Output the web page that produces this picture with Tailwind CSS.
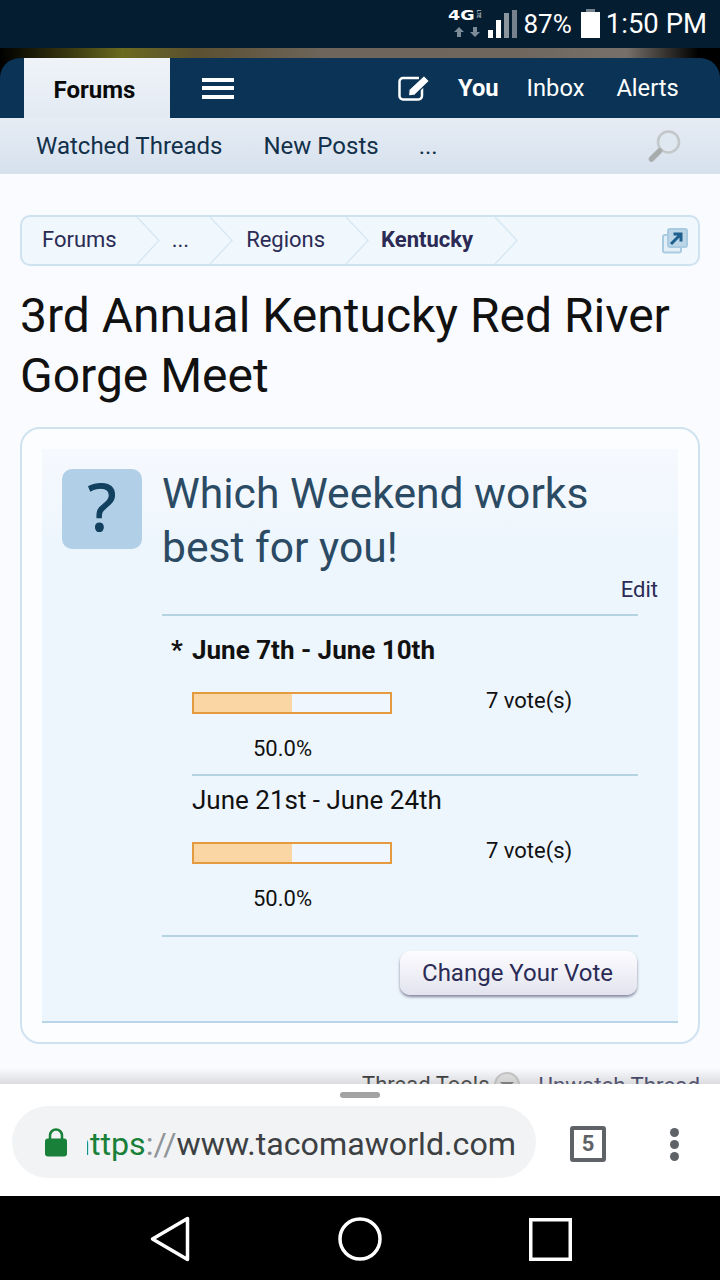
<!DOCTYPE html>
<html>
<head>
<meta charset="utf-8">
<title>3rd Annual Kentucky Red River Gorge Meet</title>
<script src="https://cdn.jsdelivr.net/npm/@tailwindcss/browser@4"></script>
</head>
<body class="m-0 bg-black font-['Roboto',sans-serif]">
<div class="w-[720px] h-[1280px] flex flex-col overflow-hidden">

  <!-- status bar -->
  <div class="h-[48px] shrink-0 bg-[#051d31] flex items-center justify-end pr-[13px] text-white">
    <div class="relative w-[36px] h-[38px] mr-[3px] shrink-0">
      <span class="absolute left-[-1px] top-[3px] origin-left scale-x-125 text-[14px] leading-[14px] font-bold text-white font-['DejaVu_Sans',sans-serif]">4G</span>
      <span class="absolute left-[26px] top-[5px] text-[5px] leading-[8px] font-bold text-[#b8c0c7] [writing-mode:vertical-rl]">LTE</span>
      <svg class="absolute left-[5px] top-[22px]" width="26" height="10" viewBox="0 0 26 10"><path d="M5 0l5 5H7v5H3V5H0z M21 10l-5-5h3V0h4v5h3z" fill="#7d8b96"/></svg>
    </div>
    <svg class="mr-[7px] mb-[1px]" width="29" height="29" viewBox="0 0 29 29">
      <rect x="0" y="21" width="5" height="8" fill="#fff"/>
      <rect x="8" y="11" width="5" height="18" fill="#fff"/>
      <rect x="16" y="4" width="5" height="25" fill="#8a959e"/>
      <rect x="24" y="1" width="5" height="28" fill="#75828e"/>
    </svg>
    <span class="text-[26px] leading-none mr-[9px] mb-[1px]">87%</span>
    <svg class="mr-[6px] mb-[1px]" width="19" height="29" viewBox="0 0 19 29"><rect x="5" y="0" width="9" height="4" fill="#75828e"/><rect x="0" y="3" width="19" height="26" fill="#fff"/></svg>
    <span class="text-[27.5px] leading-none mb-[1px]">1:50 PM</span>
  </div>

  <!-- header photo strip + nav -->
  <div class="h-[70px] shrink-0 bg-[linear-gradient(90deg,#000_0%,#3c3a10_10%,#6b6a20_17%,#5b5030_27%,#6e655c_45%,#6f675e_72%,#77706a_87%,#000_97%)]">
    <div class="mt-[10px] h-[60px] flex items-center bg-[#0a3355] rounded-t-[20px] text-white">
      <div class="ml-[24px] w-[146px] h-[60px] pt-[3px] pr-[5px] shrink-0 bg-[linear-gradient(#eff3f8,#e3eaf3)] text-[#0a0a0a] font-bold text-[24px] flex items-center justify-center">Forums</div>
      <div class="ml-[32px] w-[32px] h-[21px] flex flex-col justify-between">
        <div class="h-[4px] bg-white"></div>
        <div class="h-[4px] bg-white"></div>
        <div class="h-[4px] bg-white"></div>
      </div>
      <svg class="ml-[164px]" width="34" height="26" viewBox="0 0 34 26" fill="none">
        <path d="M24 13v8a3.5 3.5 0 0 1-3.5 3.5H5A3.5 3.5 0 0 1 1.5 21V6.500A3.5 3.5 0 0 1 5 3h16" stroke="#fff" stroke-width="2.500"/>
        <path d="M11 14.500L26 0.500l5.500 5.500L17 20l-6.500 1z" fill="#fff" stroke="#0a3355" stroke-width="1.200"/>
      </svg>
      <span class="ml-[26px] pt-[1px] font-bold text-[23.7px]">You</span>
      <span class="ml-[28px] pt-[1px] text-[23.7px]">Inbox</span>
      <span class="ml-[32px] pt-[1px] text-[23.7px]">Alerts</span>
    </div>
  </div>

  <!-- sub nav -->
  <div class="h-[56px] shrink-0 bg-[linear-gradient(#e6ecf4,#d6e1ee)] flex items-center text-[#12304a] text-[24px] pb-[1px]">
    <span class="ml-[36px]">Watched Threads</span>
    <span class="ml-[41px]">New Posts</span>
    <span class="ml-[40px]">...</span>
    <svg class="ml-auto mr-[38px] mt-[1px]" width="34" height="34" viewBox="0 0 34 34" fill="none">
      <circle cx="20.500" cy="13" r="10.500" fill="#dfe8f1" stroke="#c3c7ca" stroke-width="2.500"/>
      <path d="M11.500 22L3.500 30" stroke="#a9acad" stroke-width="5.500" stroke-linecap="round"/>
    </svg>
  </div>

  <!-- page content -->
  <div class="relative flex-1 min-h-0 overflow-hidden bg-[#fafbff] px-[20px] pt-[41px]">
    <div class="h-[51px] border-2 border-[#cfe2f0] rounded-[10px] bg-[#f0f7fd] flex items-center text-[#2b2b55] text-[22px]">
      <span class="ml-[20px] mb-[2px]">Forums</span>
      <svg class="ml-[19px] shrink-0" width="24" height="47" viewBox="0 0 24 47" fill="none"><path d="M1 0l22 23.500L1 47" stroke="#d8e8f3" stroke-width="1.500"/></svg>
      <span class="ml-[12px] mb-[2px]">...</span>
      <svg class="ml-[20px] shrink-0" width="24" height="47" viewBox="0 0 24 47" fill="none"><path d="M1 0l22 23.500L1 47" stroke="#d8e8f3" stroke-width="1.500"/></svg>
      <span class="ml-[13px] mb-[2px]">Regions</span>
      <svg class="ml-[20px] shrink-0" width="24" height="47" viewBox="0 0 24 47" fill="none"><path d="M1 0l22 23.500L1 47" stroke="#d8e8f3" stroke-width="1.500"/></svg>
      <span class="ml-[12px] mb-[2px] font-bold">Kentucky</span>
      <svg class="ml-[21px] shrink-0" width="24" height="47" viewBox="0 0 24 47" fill="none"><path d="M1 0l22 23.500L1 47" stroke="#d8e8f3" stroke-width="1.500"/></svg>
      <svg class="ml-auto mr-[10px]" width="26" height="26" viewBox="0 0 26 26" fill="none">
        <rect x="1" y="7" width="18" height="17.500" rx="2" fill="#e3eef6" stroke="#a9cbe1" stroke-width="2"/>
        <rect x="6" y="1" width="19" height="18" rx="2" fill="#bcd6e8" stroke="#a9cbe1" stroke-width="2"/>
        <path d="M9 16l9-9M11.500 6h7.500V13.500" stroke="#1d5f8e" stroke-width="3"/>
      </svg>
    </div>

    <h1 class="mt-[20px] text-[48px] leading-[60px] font-normal text-[#111] whitespace-nowrap">3rd Annual Kentucky Red River<br>Gorge Meet</h1>

    <!-- poll -->
    <div class="mt-[21px] h-[617px] border-2 border-[#d0e2ef] rounded-[20px] bg-[#fcfdff] px-[20px] pt-[20px]">
      <div class="h-[574px] border-b-2 border-[#b7d5e6] bg-[linear-gradient(#f6f9fe,#eef6fd_90px)] pl-[20px] pt-[20px] text-[#111]">
        <div class="flex">
          <div class="w-[80px] h-[80px] shrink-0 rounded-[10px] bg-[#b1cfe6] text-[#12405f] text-[66px] leading-[73px] font-normal [-webkit-text-stroke:1.2px_#12405f] text-center font-['Open_Sans',sans-serif]">?</div>
          <div class="ml-[20px] text-[42.6px] leading-[54px] text-[#2b4a63] mt-[-3px]">Which Weekend works<br>best for you!</div>
        </div>
        <div class="mt-[3px] pr-[20px] text-right text-[22px] leading-[26px] text-[#2b2b55] h-[26px]">Edit</div>

        <div class="ml-[100px] w-[476px] mt-[11px] border-t-2 border-[#b5d3e3]">
          <div class="h-[160px] flex flex-col border-b-2 border-[#b5d3e3] ml-[30px]">
            <div class="text-[26px] leading-[30px] font-bold mt-[19px] whitespace-nowrap relative"><span class="absolute left-[-21px]">*</span>June 7th - June 10th</div>
            <div class="flex mt-[27px]">
              <div class="w-[200px] h-[22px] border-2 border-[#e69a3f] bg-[#f0f6fd]"><div class="h-full w-1/2 bg-[#fbd6a5]"></div></div>
              <span class="ml-[94px] text-[22px] leading-[26px] mt-[-4px]">7 vote(s)</span>
            </div>
            <div class="ml-[61px] mt-[23px] text-[22px] leading-[24px]">50.0%</div>
          </div>
          <div class="h-[161px] flex flex-col border-b-2 border-[#b5d3e3] pl-[30px]">
            <div class="text-[26px] leading-[30px] mt-[9px] whitespace-nowrap">June 21st - June 24th</div>
            <div class="flex mt-[27px]">
              <div class="w-[200px] h-[22px] border-2 border-[#e69a3f] bg-[#f0f6fd]"><div class="h-full w-1/2 bg-[#fbd6a5]"></div></div>
              <span class="ml-[94px] text-[22px] leading-[26px] mt-[-4px]">7 vote(s)</span>
            </div>
            <div class="ml-[61px] mt-[23px] text-[22px] leading-[24px]">50.0%</div>
          </div>
          <div class="flex justify-end mt-[14px] pr-[1px]">
            <div class="w-[237px] h-[44px] rounded-[10px] bg-[linear-gradient(#fdfdff,#e3e3ef)] shadow-[0_2px_3px_rgba(60,60,90,0.6)] text-[#2b2b55] text-[24px] flex items-center justify-center pr-[2px]">Change Your Vote</div>
          </div>
        </div>
      </div>
    </div>

    <div class="mt-[28px] flex justify-end text-[#2b2b55] text-[22.3px] leading-[26px] whitespace-nowrap">
      <span class="text-[#222] text-[22px]">Thread Tools</span>
      <span class="ml-[4px] mr-[19px] w-[26px] h-[26px] rounded-full border-2 border-[#c7c7c7] bg-[#e5e5e5] flex items-center justify-center shrink-0"><span class="w-0 h-0 border-x-[7px] border-x-transparent border-t-[7px] border-t-[#666]"></span></span>
      <span>Unwatch Thread</span>
    </div>

    <div class="absolute left-0 right-0 bottom-0 h-[16px] bg-[linear-gradient(rgba(170,170,170,0),rgba(170,170,170,0.38))]"></div>
  </div>

  <!-- chrome bottom bar -->
  <div class="h-[112px] shrink-0 bg-white relative flex items-center pt-[8px]">
    <div class="absolute left-[340px] top-[8px] w-[40px] h-[6px] rounded-full bg-[#a3a3a3]"></div>
    <div class="ml-[12px] mb-[4px] w-[524px] h-[72px] rounded-full bg-[#f1f3f4] flex items-center shrink-0">
      <svg class="ml-[33px] shrink-0" width="22" height="29" viewBox="0 0 22 29" fill="none">
        <path d="M5 12V7.500a6 6 0 0 1 12 0V12" stroke="#188038" stroke-width="2.500"/>
        <rect x="0" y="10.500" width="22" height="18" rx="3" fill="#188038"/>
      </svg>
      <div class="ml-[20px] w-[429px] pt-[4px] overflow-hidden flex justify-end text-[32.2px] leading-[40px] whitespace-nowrap">
        <span class="shrink-0"><span class="text-[#188038]">https</span><span class="text-[#8f9499]">://</span><span class="text-[#3c4043]">www.tacomaworld.com</span></span>
      </div>
    </div>
    <div class="ml-[34px] w-[36px] h-[36px] shrink-0 border-[4px] border-[#5f6368] rounded-[3px] flex items-center justify-center text-[#5f6368] font-bold text-[22px] leading-none">5</div>
    <div class="ml-[64px] flex flex-col gap-[3px]">
      <div class="w-[9px] h-[9px] rounded-full bg-[#5f6368]"></div>
      <div class="w-[9px] h-[9px] rounded-full bg-[#5f6368]"></div>
      <div class="w-[9px] h-[9px] rounded-full bg-[#5f6368]"></div>
    </div>
  </div>

  <!-- android nav -->
  <div class="h-[84px] shrink-0 bg-black flex items-center relative">
    <svg class="ml-[150px] mt-[2px]" width="40" height="46" viewBox="0 0 40 46" fill="none"><path d="M37.500 2.500v41L2.500 23z" stroke="#fff" stroke-width="3.500" stroke-linejoin="round"/></svg>
    <svg class="ml-[148px] mt-[2px]" width="44" height="44" viewBox="0 0 44 44" fill="none"><circle cx="22" cy="22" r="20" stroke="#fff" stroke-width="3.500"/></svg>
    <svg class="ml-[147px] mt-[2px]" width="43" height="43" viewBox="0 0 43 43" fill="none"><rect x="1.750" y="1.750" width="39.500" height="39.500" stroke="#fff" stroke-width="3.500"/></svg>
  </div>
</div>
</body>
</html>
